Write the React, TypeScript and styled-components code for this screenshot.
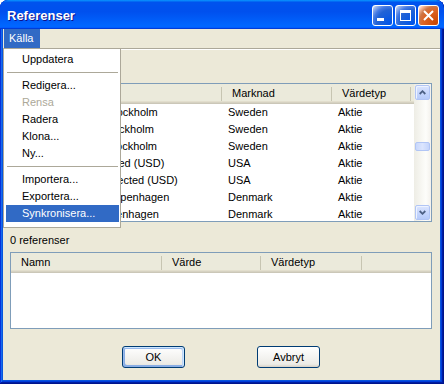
import React from "react";
import styled, { createGlobalStyle } from "styled-components";

const GlobalStyle = createGlobalStyle`
  html, body {
    margin: 0;
    padding: 0;
    background: #fff;
  }
  body {
    font-family: "Liberation Sans", Arial, sans-serif;
    font-size: 11px;
    color: #000;
  }
  * {
    box-sizing: border-box;
  }
`;

const Frame = styled.div`
  width: 444px;
  height: 384px;
  display: flex;
  flex-direction: column;
  border-radius: 8px 8px 0 0;
  background: #0855dd;
  box-shadow: inset -1px -1px #00138c, inset 1px 1px #0831d9,
    inset -2px -2px #001ea0, inset 2px 2px #166aee, inset -3px -3px #003bda,
    inset 3px 3px #0855dd;
  overflow: hidden;
`;

const TitleBar = styled.div`
  height: 29px;
  flex-shrink: 0;
  display: flex;
  align-items: center;
  padding: 2px 5px 0 7px;
  border-radius: 8px 8px 0 0;
  background: linear-gradient(
    180deg,
    #0997ff,
    #0053ee 8%,
    #0050ee 40%,
    #06f 88%,
    #06f 93%,
    #005bff 95%,
    #003dd7 96%,
    #003dd7
  );
`;

const Title = styled.span`
  flex: 1;
  color: #fff;
  font-weight: bold;
  font-size: 13px;
  text-shadow: 1px 1px #0f1089;
  margin-top: -1px;
`;

const CaptionButtons = styled.div`
  display: flex;
  gap: 2px;
`;

const CaptionButton = styled.div<{ $close?: boolean }>`
  width: 21px;
  height: 21px;
  border: 1px solid #fff;
  border-radius: 3px;
  display: flex;
  align-items: center;
  justify-content: center;
  background: ${(p) =>
    p.$close
      ? "radial-gradient(circle at 90% 90%, #cc4600 0%, #dc6527 55%, #cd7546 70%, #ffccb2 90%, #fff 100%)"
      : "radial-gradient(circle at 90% 90%, #0054e9 0%, #2263d5 55%, #4479e4 70%, #a3bbec 90%, #fff 100%)"};
`;

const Client = styled.div`
  flex: 1;
  margin: 0 4px 4px 3px;
  background: #ece9d8;
  display: flex;
  flex-direction: column;
`;

const MenuBar = styled.div`
  height: 19px;
  flex-shrink: 0;
  display: flex;
  padding-left: 1px;
`;

const MenuRoot = styled.div`
  position: relative;
`;

const MenuTitle = styled.div<{ $open?: boolean }>`
  line-height: 19px;
  padding: 0 7px 0 5px;
  background: ${(p) => (p.$open ? "#316ac5" : "transparent")};
  color: ${(p) => (p.$open ? "#fff" : "#000")};
`;

const Popup = styled.div`
  position: absolute;
  left: -1px;
  top: 100%;
  width: 118px;
  background: #fff;
  border: 1px solid #aca899;
  padding: 2px 1px 5px 2px;
  z-index: 10;
`;

const MenuItem = styled.div<{ $active?: boolean; $disabled?: boolean }>`
  height: 17px;
  line-height: 17px;
  padding-left: 16px;
  white-space: nowrap;
  background: ${(p) => (p.$active ? "#316ac5" : "transparent")};
  color: ${(p) => (p.$active ? "#fff" : p.$disabled ? "#aca899" : "#000")};
`;

const MenuSeparator = styled.div`
  height: 1px;
  margin: 4px 1px;
  background: #aca899;
`;

const EtchedLine = styled.div`
  height: 2px;
  flex-shrink: 0;
  border-top: 1px solid #aca899;
  border-bottom: 1px solid #fff;
`;

const Body = styled.div`
  flex: 1;
  display: flex;
  flex-direction: column;
  padding: 33px 8px 12px 7px;
`;

const ListBox = styled.div<{ $height: number }>`
  height: ${(p) => p.$height}px;
  flex-shrink: 0;
  border: 1px solid #7f9db9;
  background: #fff;
  display: flex;
  overflow: hidden;
`;

const ListMain = styled.div`
  flex: 1;
  min-width: 0;
  display: flex;
  flex-direction: column;
  overflow: hidden;
`;

const Header = styled.div`
  display: flex;
  height: 20px;
  flex-shrink: 0;
  background: #ebeadb;
  box-shadow: inset 0 -1px #cbc7b8, inset 0 -2px #d6d2c2, inset 0 -3px #e2decd;
`;

const HeaderCell = styled.div<{ $w?: number }>`
  width: ${(p) => (p.$w ? `${p.$w}px` : "auto")};
  flex: ${(p) => (p.$w ? "none" : 1)};
  padding-left: 10px;
  line-height: 19px;
  white-space: nowrap;
  overflow: hidden;
  background: ${(p) =>
    p.$w
      ? "linear-gradient(#c7c5b2, #c7c5b2) right 3px / 1px 14px no-repeat"
      : "none"};
`;

const Row = styled.div`
  display: flex;
  height: 17px;
  flex-shrink: 0;
`;

const Cell = styled.div<{ $w: number }>`
  width: ${(p) => p.$w}px;
  flex: none;
  padding-left: 6px;
  line-height: 17px;
  white-space: nowrap;
  overflow: hidden;
`;

const ScrollBar = styled.div`
  width: 17px;
  flex-shrink: 0;
  display: flex;
  flex-direction: column;
  align-items: center;
  padding: 1px 0;
  background: linear-gradient(90deg, #eeede5, #fdfdfa 70%, #f3f1ec);
`;

const ScrollButton = styled.div<{ $bottom?: boolean }>`
  width: 15px;
  height: 15px;
  margin-top: ${(p) => (p.$bottom ? "auto" : "0")};
  border: 1px solid #b1c5f5;
  border-radius: 2px;
  display: flex;
  align-items: center;
  justify-content: center;
  background: linear-gradient(180deg, #dbe5fe 0%, #c7d7fd 50%, #b6cbfa 100%);
  box-shadow: inset 1px 1px #eef3ff;
`;

const Thumb = styled.div`
  width: 15px;
  height: 9px;
  margin-top: 42px;
  border: 1px solid #b1c5f5;
  border-radius: 2px;
  background: linear-gradient(90deg, #c9d8fc, #dbe5fe 50%, #c4d4fb);
`;

const Label = styled.div`
  line-height: 14px;
  margin: 11px 0 5px 0;
`;

const ButtonRow = styled.div`
  display: flex;
  justify-content: center;
  gap: 72px;
  margin-top: 17px;
`;

const DialogButton = styled.button<{ $default?: boolean }>`
  width: 63px;
  height: 22px;
  padding: 0;
  border: 1px solid #003c74;
  border-radius: 3px;
  background: linear-gradient(180deg, #fff, #ecebe6 86%, #d6d0c5);
  font-family: "Liberation Sans", Arial, sans-serif;
  font-size: 11px;
  color: #000;
  box-shadow: ${(p) =>
    p.$default
      ? "inset -1px 1px #cee7ff, inset 1px 2px #98b8ea, inset -2px 2px #bcd4f6, inset 1px -1px #89ade4, inset 2px -2px #89ade4"
      : "none"};
`;

const Chevron = ({ down }: { down?: boolean }) => (
  <svg width="7" height="5" viewBox="0 0 7 5">
    <path
      d={down ? "M0.7 1 L3.5 3.8 L6.3 1" : "M0.7 4 L3.5 1.2 L6.3 4"}
      stroke="#4d6185"
      strokeWidth="1.8"
      fill="none"
    />
  </svg>
);

const sources = [
  ["Nordic Large Cap Stockholm", "Sweden", "Aktie"],
  ["Nordic Mid Cap - Stockholm", "Sweden", "Aktie"],
  ["Nordic Small Cap Stockholm", "Sweden", "Aktie"],
  ["NASDAQ OMX - Listed (USD)", "USA", "Aktie"],
  ["NASDAQ Global Selected (USD)", "USA", "Aktie"],
  ["Nordic Large Cap Copenhagen", "Denmark", "Aktie"],
  ["Nordic Mid Cap Copenhagen", "Denmark", "Aktie"],
];

const App: React.FC = () => {
  return (
    <>
      <GlobalStyle />
      <Frame>
        <TitleBar>
          <Title>Referenser</Title>
          <CaptionButtons>
            <CaptionButton>
              <svg width="19" height="19" viewBox="0 0 19 19">
                <rect x="4" y="12" width="7" height="3" fill="#fff" />
              </svg>
            </CaptionButton>
            <CaptionButton>
              <svg width="19" height="19" viewBox="0 0 19 19">
                <rect x="4.5" y="4.5" width="10" height="10" stroke="#fff" fill="none" />
                <rect x="4" y="4" width="11" height="3" fill="#fff" />
              </svg>
            </CaptionButton>
            <CaptionButton $close>
              <svg width="19" height="19" viewBox="0 0 19 19">
                <path d="M5 5 L14 14 M14 5 L5 14" stroke="#fff" strokeWidth="2" />
              </svg>
            </CaptionButton>
          </CaptionButtons>
        </TitleBar>
        <Client>
          <MenuBar>
            <MenuRoot>
              <MenuTitle $open>Källa</MenuTitle>
              <Popup>
                <MenuItem>Uppdatera</MenuItem>
                <MenuSeparator />
                <MenuItem>Redigera...</MenuItem>
                <MenuItem $disabled>Rensa</MenuItem>
                <MenuItem>Radera</MenuItem>
                <MenuItem>Klona...</MenuItem>
                <MenuItem>Ny...</MenuItem>
                <MenuSeparator />
                <MenuItem>Importera...</MenuItem>
                <MenuItem>Exportera...</MenuItem>
                <MenuItem $active>Synkronisera...</MenuItem>
              </Popup>
            </MenuRoot>
          </MenuBar>
          <EtchedLine />
          <Body>
            <ListBox $height={139}>
              <ListMain>
                <Header>
                  <HeaderCell $w={211}>Namn</HeaderCell>
                  <HeaderCell $w={110}>Marknad</HeaderCell>
                  <HeaderCell $w={79}>Värdetyp</HeaderCell>
                  <HeaderCell />
                </Header>
                {sources.map(([name, market, type]) => (
                  <Row key={name}>
                    <Cell $w={211}>{name}</Cell>
                    <Cell $w={110}>{market}</Cell>
                    <Cell $w={79}>{type}</Cell>
                  </Row>
                ))}
              </ListMain>
              <ScrollBar>
                <ScrollButton>
                  <Chevron />
                </ScrollButton>
                <Thumb />
                <ScrollButton $bottom>
                  <Chevron down />
                </ScrollButton>
              </ScrollBar>
            </ListBox>
            <Label>0 referenser</Label>
            <ListBox $height={77}>
              <ListMain>
                <Header>
                  <HeaderCell $w={151}>Namn</HeaderCell>
                  <HeaderCell $w={99}>Värde</HeaderCell>
                  <HeaderCell $w={101}>Värdetyp</HeaderCell>
                  <HeaderCell />
                </Header>
              </ListMain>
            </ListBox>
            <ButtonRow>
              <DialogButton $default>OK</DialogButton>
              <DialogButton>Avbryt</DialogButton>
            </ButtonRow>
          </Body>
        </Client>
      </Frame>
    </>
  );
};

export default App;
